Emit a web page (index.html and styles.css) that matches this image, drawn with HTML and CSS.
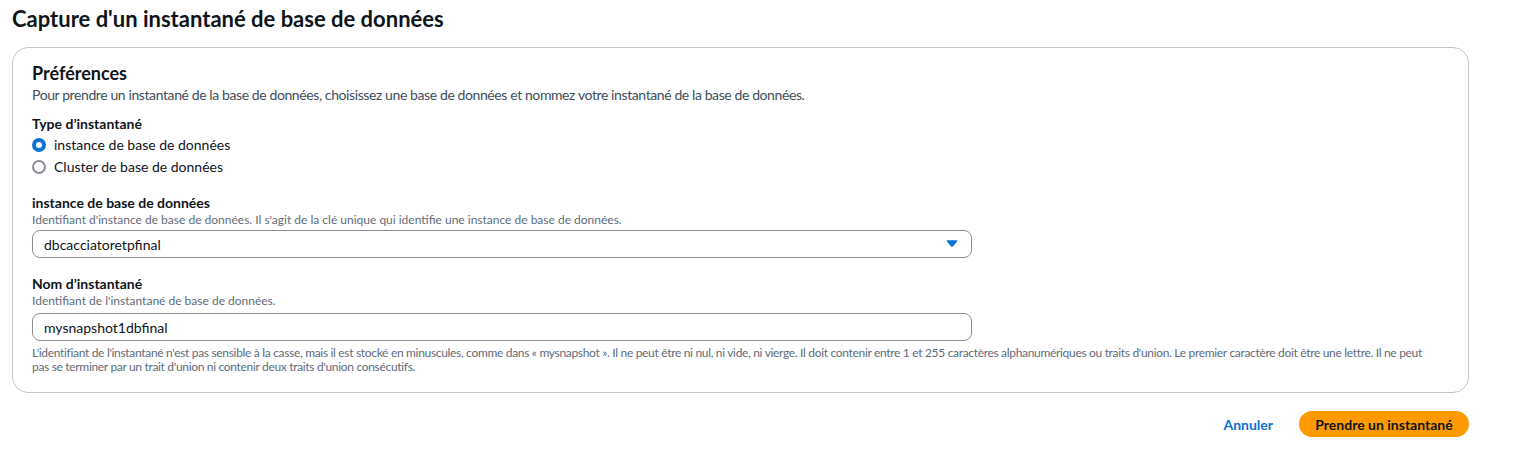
FILE: index.html
```html
<!DOCTYPE html>
<html lang="fr">
<head>
<meta charset="utf-8">
<title>Capture d'un instantané de base de données</title>
<link rel="stylesheet" href="styles.css">
</head>
<body>
<div class="page">
  <h1 class="title">Capture d'un instantané de base de données</h1>
  <div class="container">
    <h2 class="section-title">Préférences</h2>
    <p class="section-desc">Pour prendre un instantané de la base de données, choisissez une base de données et nommez votre instantané de la base de données.</p>

    <div class="field">
      <div class="label">Type d’instantané</div>
      <div class="radios">
        <label class="radio"><span class="dot checked"></span><span>instance de base de données</span></label>
        <label class="radio"><span class="dot"></span><span>Cluster de base de données</span></label>
      </div>
    </div>

    <div class="field">
      <div class="label">instance de base de données</div>
      <div class="desc">Identifiant d'instance de base de données. Il s'agit de la clé unique qui identifie une instance de base de données.</div>
      <div class="select">
        <span>dbcacciatoretpfinal</span>
        <svg class="caret" width="12" height="12" viewBox="0 0 16 16"><path d="M2 4h12L8 11z" fill="#0972d3" stroke="#0972d3" stroke-width="2" stroke-linejoin="round"/></svg>
      </div>
    </div>

    <div class="field">
      <div class="label">Nom d’instantané</div>
      <div class="desc">Identifiant de l'instantané de base de données.</div>
      <div class="input">mysnapshot1dbfinal</div>
      <div class="constraint">L'identifiant de l'instantané n'est pas sensible à la casse, mais il est stocké en minuscules, comme dans « mysnapshot ». Il ne peut être ni nul, ni vide, ni vierge. Il doit contenir entre 1 et 255 caractères alphanumériques ou traits d'union. Le premier caractère doit être une lettre. Il ne peut pas se terminer par un trait d'union ni contenir deux traits d'union consécutifs.</div>
    </div>
  </div>
  <div class="actions">
    <a class="link-btn">Annuler</a>
    <button class="primary">Prendre un instantané</button>
  </div>
</div>
</body>
</html>
```

FILE: styles.css
```css
* { box-sizing: border-box; }
body {
  margin: 0;
  background: #fff;
  font-family: Lato, "Liberation Sans", Arial, sans-serif;
  color: #0f141a;
}
.page {
  width: 1469px;
  padding: 0 0 0 12px;
}
.title {
  margin: 0;
  padding-top: 6px;
  font-size: 22px;
  line-height: 26px;
  font-weight: 700;
}
.container {
  margin-top: 15px;
  border: 1px solid #c6c6cd;
  border-radius: 16px;
  padding: 14px 19px 18px 19px;
}
.section-title {
  margin: 0;
  font-size: 18px;
  line-height: 22px;
  font-weight: 700;
}
.section-desc {
  margin: 1px 0 0;
  font-size: 14px;
  line-height: 20px;
  letter-spacing: -0.4px;
  color: #414d5c;
}
.field { margin-top: 10px; }
.field + .field { margin-top: 17px; }
.label {
  font-size: 14px;
  line-height: 18px;
  font-weight: 700;
}
.desc {
  font-size: 12px;
  line-height: 16px;
  color: #5f6b7a;
}
.radios { margin-top: 2px; display: flex; flex-direction: column; gap: 2px; }
.radio {
  display: flex;
  align-items: center;
  gap: 8px;
  font-size: 14px;
  line-height: 20px;
}
.dot {
  width: 14px; height: 14px;
  border-radius: 50%;
  border: 2px solid #8c8c94;
  background: #fff;
}
.dot.checked {
  border: 4px solid #0972d3;
}
.select, .input {
  margin-top: 2px;
  width: 940px;
  height: 28px;
  border: 1px solid #8c8c94;
  border-radius: 8px;
  padding: 0 11px;
  display: flex;
  align-items: center;
  justify-content: space-between;
  font-size: 14px;
}
.input { margin-top: 4px; }
.caret { margin-right: 2px; }
.constraint {
  margin-top: 5px;
  font-size: 12px;
  line-height: 14px;
  letter-spacing: -0.32px;
  color: #5f6b7a;
  max-width: 1395px;
}
.actions {
  display: flex;
  justify-content: flex-end;
  align-items: center;
  gap: 26px;
  margin-top: 18px;
}
.link-btn {
  color: #0972d3;
  font-size: 14px;
  font-weight: 700;
  cursor: pointer;
}
.primary {
  height: 26px;
  width: 170px;
  border: none;
  border-radius: 20px;
  background: #ff9900;
  color: #0f141a;
  font-family: inherit;
  font-size: 14px;
  font-weight: 700;
}
```
